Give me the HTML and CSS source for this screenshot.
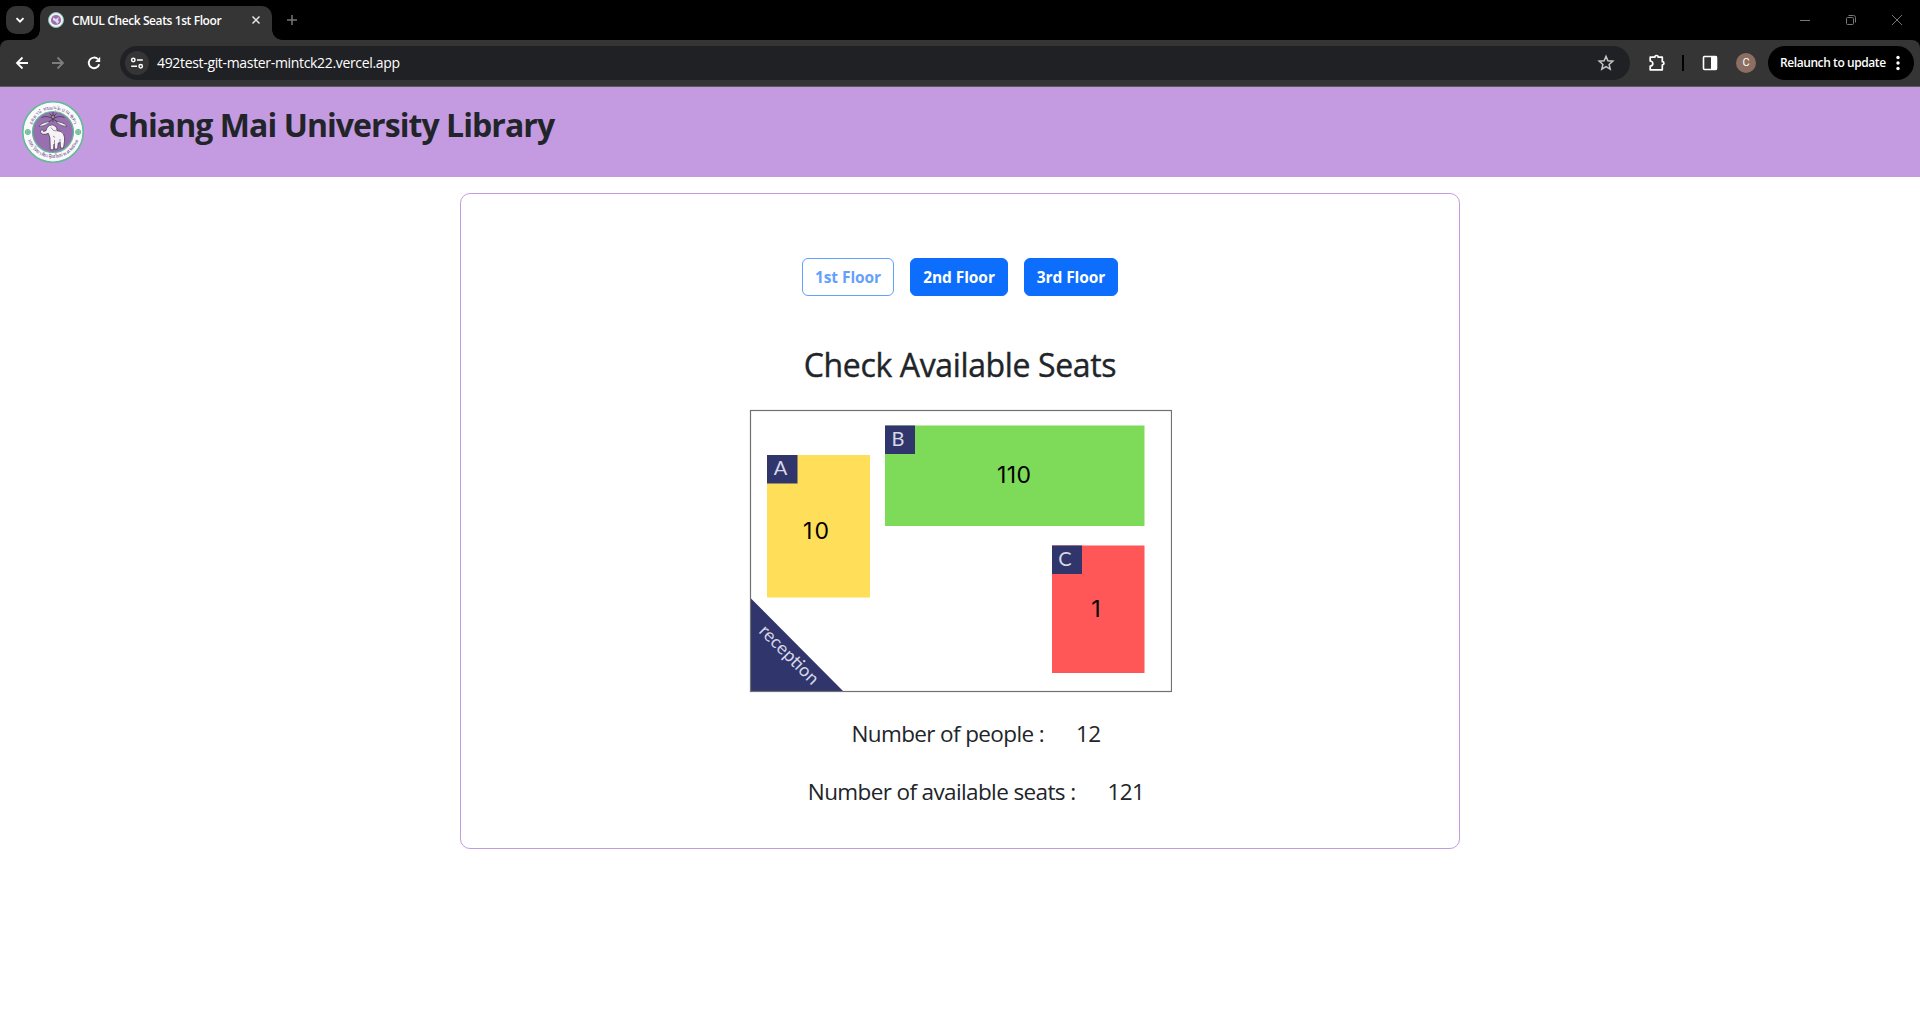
FILE: index.html
```html
<!DOCTYPE html>
<html lang="en">
<head>
<meta charset="utf-8">
<title>CMUL Check Seats 1st Floor</title>
<link rel="stylesheet" href="styles.css">
</head>
<body>
<div class="browser">
  <div class="tabstrip">
    <div class="tab-search"><svg width="28" height="28" viewBox="0 0 28 28"><path d="M10.5 12.2 14 15.7l3.5-3.5" fill="none" stroke="#fff" stroke-width="1.9"/></svg></div>
    <div class="tab">
      <svg class="favicon" width="16" height="16" viewBox="0 0 16 16"><circle cx="8" cy="8" r="7.5" fill="#f3eff6" stroke="#7fc3a6"/><circle cx="8" cy="8" r="5.1" fill="#9872b0"/><path d="M5 5.500 8 7l3-2-1 3 1 2-2 2-1-2-3-2z" fill="#e4d8eb"/></svg>
      <span class="tab-title">CMUL Check Seats 1st Floor</span>
      <svg class="tab-close" width="16" height="16" viewBox="0 0 16 16"><path d="m4.500 4.500 7 7m0-7-7 7" stroke="#e8e8e8" stroke-width="1.5"/></svg>
    </div>
    <svg class="new-tab" width="16" height="16" viewBox="0 0 16 16"><path d="M8 3v10M3 8h10" stroke="#777" stroke-width="1.5"/></svg>
    <div class="window-controls">
      <svg width="46" height="40" viewBox="0 0 46 40"><path d="M18 20.500h10" stroke="#777"/></svg>
      <svg width="46" height="40" viewBox="0 0 46 40"><rect x="18.500" y="17.500" width="7" height="7" rx="1" fill="none" stroke="#777"/><path d="M20.500 15.500h5q2 0 2 2v5" fill="none" stroke="#777"/></svg>
      <svg width="46" height="40" viewBox="0 0 46 40"><path d="m18 15 10 10m0-10-10 10" stroke="#777"/></svg>
    </div>
  </div>
  <div class="toolbar">
    <svg class="nav" width="36" height="46" viewBox="0 0 36 46"><path d="M28 23H17m5.500-5.500L17 23l5.500 5.500" fill="none" stroke="#fff" stroke-width="1.8"/></svg>
    <svg class="nav" width="36" height="46" viewBox="0 0 36 46"><path d="M16 23h11m-5.500-5.500L27 23l-5.500 5.500" fill="none" stroke="#7d7d7d" stroke-width="1.8"/></svg>
    <svg class="nav" width="36" height="46" viewBox="0 0 36 46"><path d="M27.200 24.200a5.300 5.300 0 1 1-1.300-5" fill="none" stroke="#fff" stroke-width="1.900"/><path d="M28.200 16.700v5.200H23z" fill="#fff"/></svg>
    <div class="omnibox">
      <svg class="site-info" width="24" height="24" viewBox="0 0 24 24"><circle cx="12" cy="12" r="12" fill="#353535"/><g fill="none" stroke="#fff" stroke-width="1.500"><circle cx="8.300" cy="9" r="1.700"/><path d="M12 9h5.800M6.200 15.200H12"/><circle cx="15.700" cy="15.200" r="1.700"/></g></svg>
      <span class="url">492test-git-master-mintck22.vercel.app</span>
      <svg class="star" width="18" height="18" viewBox="0 0 18 18"><path d="m9 2.400 1.900 4.400 4.900.4-3.700 3.200 1.100 4.700L9 12.600l-4.200 2.500 1.100-4.700-3.700-3.200 4.900-.4z" fill="none" stroke="#c8c8c8" stroke-width="1.500"/></svg>
    </div>
    <svg class="puzzle" width="20" height="20" viewBox="0 0 20 20"><path d="M3.200 4.200h4.600a1.700 1.700 0 0 1 3.400 0h4.100v4.500a1.600 1.600 0 0 1 0 3.200v4.900H3.200v-3.600a2.600 2.600 0 0 0 0-5.200z" fill="none" stroke="#fff" stroke-width="1.700" stroke-linejoin="round"/></svg>
    <span class="separator"></span>
    <svg class="panel" width="16" height="16" viewBox="0 0 16 16"><rect x="1.500" y="1.500" width="13" height="13" rx="1" fill="none" stroke="#fff" stroke-width="1.600"/><path d="M9 1h5.500v14H9z" fill="#fff"/></svg>
    <span class="avatar">C</span>
    <div class="relaunch"><span class="relaunch-text">Relaunch to update</span><svg width="4" height="16" viewBox="0 0 4 16" fill="#fff"><circle cx="2" cy="2.500" r="1.700"/><circle cx="2" cy="8" r="1.700"/><circle cx="2" cy="13.500" r="1.700"/></svg></div>
  </div>
</div>

<header class="site-header">
  <svg class="seal" width="62" height="62" viewBox="0 0 62 62">
    <defs>
      <path id="arc-top" d="M8.400 31a22.600 22.600 0 0 1 45.200 0"/>
      <path id="arc-bottom" d="M4.800 31a26.200 26.200 0 0 0 52.400 0"/>
    </defs>
    <circle cx="31" cy="31" r="30.200" fill="#fbfafc" stroke="#62bb96" stroke-width="1.600"/>
    <circle cx="31" cy="31" r="20.500" fill="#986fb1" stroke="#62bb96" stroke-width="1.200"/>
    <g class="seal-text">
      <text text-anchor="middle"><textPath href="#arc-top" startOffset="50%" textLength="56">อตฺตานํ ทมยนฺติ ปณฺฑิตา</textPath></text>
      <text text-anchor="middle"><textPath href="#arc-bottom" startOffset="50%" textLength="66">มหาวิทยาลัยเชียงใหม่ พ.ศ.๒๕๐๗</textPath></text>
    </g>
    <g fill="#a5d9c0" stroke="#55b58c" stroke-width=".8"><circle cx="5.800" cy="31" r="2.600"/><circle cx="56.200" cy="31" r="2.600"/><path d="M3.200 31h5.200M5.800 28.400v5.200M53.600 31h5.200M56.200 28.400v5.200"/></g>
    <g fill="none" stroke="#51465a" stroke-width="1">
      <path d="M31 11v10M27.500 12.500 31 16l3.500-3.500M19.500 16.500q6-2.500 11.500 1.500 5.500-4 11.500-1.500M31 18l-9 6M31 18l10 6"/>
      <circle cx="31" cy="16" r="1.800" fill="#9d90a5"/>
    </g>
    <g fill="#f1eef2" stroke="#4c4055" stroke-width=".7"><path d="M17 25.500q1-3 9.500-5l.7 1.200q-5 4-10.200 3.800zM45 25.500q-1-3-9.500-5l-.7 1.200q5 4 10.200 3.800z"/></g>
    <path d="M18.500 30.200q.6-2 2.200-1.500l.7 1.800 2.600-.8q.2-3.200 3.300-5.200 3.200-1.600 6.200.7 1.700 1.700 1.500 4.500 4.500 0 6.500 3.300 1.600 3 1 7.500l-1 6.500h-3l-.4-5.500-1.900.6-.6 5.900h-3.200l-.3-5-.5 5.800h-3.300l-.4-12-1.600-4.500q-5 2.400-7.500-.6z" fill="#f6f3f7" stroke="#4c4055" stroke-width=".8"/>
    <path d="M29 26.500q2 4 5.500 3.500M31 35l2 1.500M38 38v5M32.500 39v5" fill="none" stroke="#776580" stroke-width=".7"/>
  </svg>
  <h1 class="site-title">Chiang Mai University Library</h1>
</header>

<main class="card">
  <nav class="floors">
    <button class="btn btn-current" disabled>1st Floor</button>
    <button class="btn btn-second">2nd Floor</button>
    <button class="btn btn-third">3rd Floor</button>
  </nav>
  <h2 class="heading">Check Available Seats</h2>
  <svg class="floor-map" width="424" height="284" viewBox="748 409 424 284">
    <path d="M750.500 598 843.500 691.500H750.500z" fill="#30356b"/>
    <rect x="750.500" y="410.500" width="421" height="281" fill="none" stroke="#717171" stroke-width="1.200"/>
    <rect x="767" y="455" width="103" height="142.500" fill="#ffde59"/>
    <rect x="885" y="425.500" width="259.500" height="100.500" fill="#7eda59"/>
    <rect x="1052" y="545.500" width="92.500" height="127.500" fill="#ff5757"/>
    <g fill="#30356b"><rect x="767" y="455" width="30.500" height="28.500"/><rect x="885" y="425.500" width="30" height="28.500"/><rect x="1052" y="545.500" width="30" height="28.500"/></g>
    <g class="zone-label"><text x="780.500" y="475">A</text><text x="898" y="446">B</text><text x="1065" y="566">C</text></g>
    <g class="zone-count"><text x="816" y="538.500" textLength="26">10</text><text x="1014" y="482.500" textLength="34">110</text><text x="1096" y="616.500">1</text></g>
    <text class="reception" transform="translate(758 632) rotate(45)" textLength="76">reception</text>
  </svg>
  <p class="stat"><span class="stat-people">Number of people :</span><span class="stat-value">12</span></p>
  <p class="stat"><span class="stat-seats">Number of available seats :</span><span class="stat-value">121</span></p>
</main>
</body>
</html>
```
FILE: styles.css
```css
* { box-sizing: border-box; }
body { margin: 0; background: #fff; color: #212529; font-family: "Open Sans", "Noto Sans", sans-serif; height: 1027px; overflow: hidden; }
svg { display: block; flex: none; }
h1, h2, p { margin: 0; }
.browser { background: #000; color: #fff; white-space: nowrap; }
.tabstrip { display: flex; height: 40px; background: #000; padding-left: 6px; }
.tab-search { width: 28px; height: 28px; margin-top: 6px; border-radius: 10px; background: #353535; }
.tab { position: relative; display: flex; align-items: center; width: 232px; height: 34px; margin: 6px 0 0 6px; padding: 0 8px 6px; border-radius: 10px 10px 0 0; background: #353535; }
.tab::before, .tab::after { content: ""; position: absolute; bottom: 0; width: 10px; height: 10px; }
.tab::before { left: -10px; background: radial-gradient(circle at 0 0, transparent 9.5px, #353535 10px); }
.tab::after { right: -10px; background: radial-gradient(circle at 100% 0, transparent 9.5px, #353535 10px); }
.tab-title { flex: 1; margin-left: 8px; font-size: 12px; font-weight: 600; letter-spacing: -.4px; }
.new-tab { margin: 12px 0 0 12px; }
.window-controls { display: flex; margin-left: auto; }
.toolbar { display: flex; align-items: center; height: 47px; padding: 0 6px 1px 0; background: #353535; border-bottom: 1px solid #5d5d5d; border-radius: 8px 8px 0 0; }
.omnibox { display: flex; align-items: center; width: 1510px; height: 34px; margin-left: 12px; padding: 0 15px 0 5px; border-radius: 17px; background: #202124; }
.url { flex: 1; margin-left: 8px; font-size: 14px; letter-spacing: -.33px; }
.puzzle { margin-left: 17px; }
.separator { width: 2px; height: 16px; margin-left: 15px; background: #000; }
.panel { margin-left: 18px; }
.avatar { width: 20px; height: 20px; margin-left: 18px; border-radius: 50%; background: #8d6e63; font: 11px/20px Roboto, sans-serif; text-align: center; }
.relaunch { display: flex; align-items: center; justify-content: space-between; width: 146px; height: 34px; margin-left: auto; padding: 0 14px 0 12px; border-radius: 17px; background: #000; font-size: 12px; font-weight: 600; }
.relaunch-text { letter-spacing: -.42px; }
.site-header { display: flex; height: 90px; padding: 14px 22px; background: #c49be0; }
.seal-text { font: 5px "Noto Sans", "DejaVu Sans", sans-serif; fill: #72518c; }
.site-title { margin-left: 24.5px; font-size: 32px; font-weight: 700; line-height: 48px; letter-spacing: -.94px; }
.card { display: flex; flex-direction: column; align-items: center; width: 1000px; height: 656px; margin: 16px auto 0; padding-top: 64px; border: 1px solid #c49be0; border-radius: 10px; }
.floors { display: flex; gap: 16px; }
.btn { width: 98px; height: 38px; padding: 0; border: 1px solid #0d6efd; border-radius: 6px; background: #0d6efd; color: #fff; font: 700 15.5px/24px "Open Sans", "Noto Sans", sans-serif; letter-spacing: -.07px; white-space: nowrap; }
.btn-current { width: 92px; background: #fff; color: #0d6efd; opacity: .65; }
.btn-third { width: 94px; }
.heading { margin-top: 50px; font-size: 32px; font-weight: 500; line-height: 38px; letter-spacing: -.36px; -webkit-text-stroke: .4px #212529; }
.floor-map { margin-top: 25px; }
.zone-label { font: 400 20px Lato, sans-serif; fill: #d6d8e6; text-anchor: middle; }
.zone-count { font: 23px Inter, sans-serif; fill: #000; text-anchor: middle; }
.reception { font: 18px Lato, sans-serif; fill: #d5d7e6; }
.stat { display: flex; justify-content: center; gap: 32px; margin-top: 24px; padding-left: 32px; font-size: 22.5px; line-height: 34px; letter-spacing: -.62px; }
```
